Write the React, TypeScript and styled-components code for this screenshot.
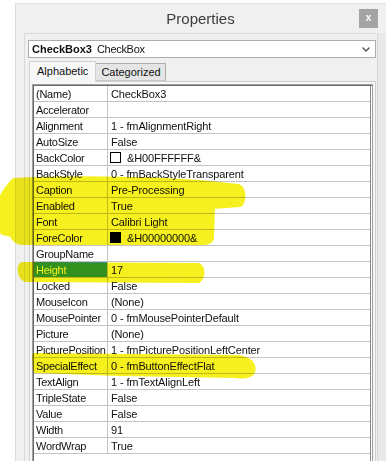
import React from "react";
import styled, { createGlobalStyle } from "styled-components";

const Global = createGlobalStyle`
  html, body { margin: 0; padding: 0; background: #ffffff; }
  body { font-family: "Liberation Sans", Arial, sans-serif; font-size: 11px; color: #111; }
  * { box-sizing: border-box; }
`;

const Page = styled.div`
  position: relative;
  display: flex;
  width: 386px;
  height: 461px;
  overflow: hidden;
  background: #ffffff;
`;

const Backdrop = styled.div`
  width: 15px;
  flex: none;
  background: #ffffff;
`;

const Window = styled.div`
  margin-top: 3px;
  width: 371px;
  display: flex;
  flex-direction: column;
  background: #f0f0f0;
  border-left: 1px solid #dcdcdc;
  border-top: 1px solid #e4e4e4;
`;

const TitleBar = styled.div`
  height: 29px;
  display: grid;
  grid-template-columns: 1fr auto 1fr;
  align-items: start;
  flex: none;
`;

const Title = styled.div`
  grid-column: 2;
  font-size: 15px;
  line-height: 18px;
  margin-top: 6px;
  color: #3c3c3c;
  margin-right: 1px;
`;

const CloseButton = styled.div`
  grid-column: 3;
  justify-self: end;
  margin: 5px 8px 0 0;
  width: 19px;
  height: 19px;
  background: #a4a4a4;
  color: #ffffff;
  font-size: 10px;
  font-weight: bold;
  line-height: 17px;
  text-align: center;
`;

const Body = styled.div`
  flex: 1;
  display: flex;
  padding-left: 8px;
  min-height: 0;
`;

const Frame = styled.div`
  width: 354px;
  border: 1px solid #d9d9d9;
  border-bottom: none;
  display: flex;
  flex-direction: column;
  padding: 6px 1px 0 3px;
`;

const RightStrip = styled.div`
  flex: 1;
  background: #e9e9e9;
`;

const Combo = styled.div`
  height: 18px;
  background: #ffffff;
  border: 1px solid #acacac;
  display: flex;
  align-items: center;
  padding: 0 5px 0 3px;
  line-height: 16px;
`;

const ComboName = styled.span`
  font-weight: bold;
  margin-right: 5px;
`;

const ComboType = styled.span`
  flex: 1;
  letter-spacing: -0.3px;
`;

const Tabs = styled.div`
  display: flex;
  align-items: flex-end;
  margin: 3px 0 0 1px;
  height: 20px;
  position: relative;
  z-index: 1;
`;

const Tab = styled.div<{ $active?: boolean }>`
  height: ${(p) => (p.$active ? "21px" : "18px")};
  margin-bottom: ${(p) => (p.$active ? "-1px" : "0")};
  padding: 0 ${(p) => (p.$active ? "7px" : "4px")} 0 ${(p) => (p.$active ? "7px" : "5px")};
  background: ${(p) => (p.$active ? "#f7f7f7" : "#e5e5e5")};
  border: 1px solid ${(p) => (p.$active ? "#d2d2d2" : "#acacac")};
  border-bottom: ${(p) => (p.$active ? "none" : "1px solid #c8c8c8")};
  border-left: ${(p) => (p.$active ? "1px solid #d2d2d2" : "none")};
  line-height: ${(p) => (p.$active ? "18px" : "17px")};
  color: #111;
`;

const TabPage = styled.div`
  flex: 1;
  margin: 0 0 0 1px;
  border: 1px solid #cfcfcf;
  border-bottom: none;
  background: #f7f7f7;
  padding: 2px 2px 0 2px;
  display: flex;
  min-height: 0;
`;

const Grid = styled.div`
  flex: 1;
  border: 1px solid #a0a0a0;
  border-bottom: none;
  background: #ffffff;
  display: flex;
  flex-direction: column;
  box-shadow: inset 1px 1px 0 #6a6a6a, inset -1px 0 0 #ffffff, inset -2px 0 0 #8a8a8a;
  padding: 1px 2px 0 1px;
  min-height: 0;
  overflow: hidden;
`;

const Row = styled.div`
  display: grid;
  grid-template-columns: 74px 1fr;
  height: 16px;
  flex: none;
  border-bottom: 1px solid #c4c4c4;
`;

const NameCell = styled.div<{ $selected?: boolean }>`
  border-right: 1px solid #c4c4c4;
  padding: 1px 0 0 2px;
  line-height: 14px;
  letter-spacing: -0.25px;
  white-space: nowrap;
  overflow: hidden;
  background: ${(p) => (p.$selected ? "#3399ff" : "transparent")};
  color: ${(p) => (p.$selected ? "#ffffff" : "#111")};
`;

const ValueCell = styled.div`
  padding: 1px 0 0 3px;
  line-height: 14px;
  letter-spacing: -0.12px;
  white-space: nowrap;
  overflow: hidden;
  display: flex;
  align-items: flex-start;
`;

const Swatch = styled.span<{ $color: string }>`
  width: 11px;
  height: 11px;
  margin: 1px 6px 0 -1px;
  border: 1px solid #000;
  background: ${(p) => p.$color};
  flex: none;
`;

const Marker = styled.svg`
  position: absolute;
  left: 0;
  top: 0;
  pointer-events: none;
  mix-blend-mode: multiply;
`;

type Prop = { name: string; value: string; swatch?: string; selected?: boolean };

const rows: Prop[] = [
  { name: "(Name)", value: "CheckBox3" },
  { name: "Accelerator", value: "" },
  { name: "Alignment", value: "1 - fmAlignmentRight" },
  { name: "AutoSize", value: "False" },
  { name: "BackColor", value: "&H00FFFFFF&", swatch: "#ffffff" },
  { name: "BackStyle", value: "0 - fmBackStyleTransparent" },
  { name: "Caption", value: "Pre-Processing" },
  { name: "Enabled", value: "True" },
  { name: "Font", value: "Calibri Light" },
  { name: "ForeColor", value: "&H00000000&", swatch: "#000000" },
  { name: "GroupName", value: "" },
  { name: "Height", value: "17", selected: true },
  { name: "Locked", value: "False" },
  { name: "MouseIcon", value: "(None)" },
  { name: "MousePointer", value: "0 - fmMousePointerDefault" },
  { name: "Picture", value: "(None)" },
  { name: "PicturePosition", value: "1 - fmPicturePositionLeftCenter" },
  { name: "SpecialEffect", value: "0 - fmButtonEffectFlat" },
  { name: "TextAlign", value: "1 - fmTextAlignLeft" },
  { name: "TripleState", value: "False" },
  { name: "Value", value: "False" },
  { name: "Width", value: "91" },
  { name: "WordWrap", value: "True" },
];

const yellow = "#f6f01e";

export default function App() {
  return (
    <>
      <Global />
      <Page>
        <Backdrop />
        <Window>
          <TitleBar>
            <Title>Properties</Title>
            <CloseButton>x</CloseButton>
          </TitleBar>
          <Body>
            <Frame>
              <Combo>
                <ComboName>CheckBox3</ComboName>
                <ComboType>CheckBox</ComboType>
                <svg width="8" height="5" viewBox="0 0 8 5">
                  <polyline points="0.5,0.5 4,4 7.5,0.5" fill="none" stroke="#555" strokeWidth="1.4" />
                </svg>
              </Combo>
              <Tabs>
                <Tab $active>Alphabetic</Tab>
                <Tab>Categorized</Tab>
              </Tabs>
              <TabPage>
                <Grid>
                  {rows.map((r) => (
                    <Row key={r.name}>
                      <NameCell $selected={r.selected}>{r.name}</NameCell>
                      <ValueCell>
                        {r.swatch && <Swatch $color={r.swatch} />}
                        {r.value}
                      </ValueCell>
                    </Row>
                  ))}
                </Grid>
              </TabPage>
            </Frame>
            <RightStrip />
          </Body>
        </Window>
        <Marker width="386" height="461" viewBox="0 0 386 461">
          <g fill={yellow} stroke={yellow} strokeWidth="6" strokeLinejoin="round">
            <path d="M14,181 C60,178 150,179 200,183 L238,187 C244,190 243,200 240,204 L212,206 L211,238 C210,242 205,242 200,242 L24,242 C16,242 14,238 12,234 L3,232 L3,196 C6,190 10,186 14,181 Z" />
            <path d="M22,265 L198,266 C203,268 202,278 198,280 L26,279 C20,277 20,267 22,265 Z" />
            <path d="M35,356 L238,358 C251,360 254,366 252,372 C249,376 242,376 236,375 L120,373 L36,370 Z" />
          </g>
        </Marker>
      </Page>
    </>
  );
}
